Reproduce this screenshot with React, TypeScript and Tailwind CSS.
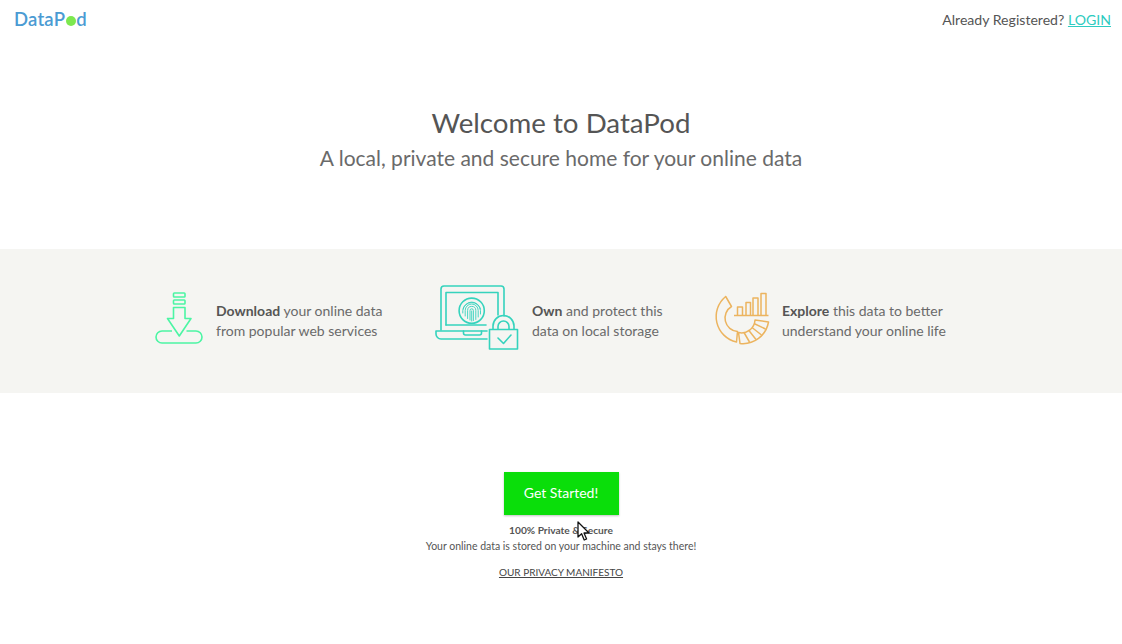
import React from 'react';

const DownloadIcon = () => (
  <svg viewBox="155 285 49 72" className="w-[49px] h-[72px] shrink-0" fill="none" stroke="#4cf5a4" strokeWidth="1.6" strokeLinejoin="round">
    <rect x="173.5" y="293" width="11.5" height="4" rx="0.8" />
    <rect x="173.5" y="300" width="11.5" height="4" rx="0.8" />
    <path d="M173.5 307.5H185V318.5H191L179.3 336L167.5 318.5H173.5Z" />
    <path d="M172 331H162A6 6 0 0 0 162 343H196A6 6 0 0 0 196 331H186.5" />
  </svg>
);

const OwnIcon = () => (
  <svg viewBox="435 285 84 72" className="w-[84px] h-[72px] shrink-0" fill="none" stroke="#35d3bd" strokeWidth="1.6" strokeLinecap="round" strokeLinejoin="round">
    <path d="M441 330V289A3 3 0 0 1 444 286H501A3 3 0 0 1 504 289V316" />
    <path d="M446 325V292.5H498V315" />
    <path d="M446 325H486" />
    <path d="M487 339H441A5 5 0 0 1 436 334V331H487" />
    <path d="M463.5 331V333A2 2 0 0 0 465.5 335H479.5A2 2 0 0 0 481.5 333V331" />
    <circle cx="471.7" cy="310.7" r="12.6" />
    <g strokeWidth="0.9">
      <path d="M463 309A9 9 0 0 1 480.5 309" />
      <path d="M462.8 313V310.5A8.9 8.9 0 0 1 480.5 310.5V314" />
      <path d="M465.2 316V310.5A6.5 6.5 0 0 1 478.2 310.5V317" />
      <path d="M467.6 318.5V310.5A4.1 4.1 0 0 1 475.8 310.5V319.5" />
      <path d="M470 320V310.5A1.7 1.7 0 0 1 473.4 310.5V320.5" />
      <path d="M471.7 311V321" />
    </g>
    <rect x="489.5" y="329.5" width="28" height="19.5" />
    <path d="M493 329V326A10.5 10.5 0 0 1 514 326V329" />
    <path d="M498 329V326.5A5.5 5.5 0 0 1 509 326.5V329" />
    <path d="M498 338L503.5 343.5L511 335" />
  </svg>
);

const ExploreIcon = () => (
  <svg viewBox="714 285 56 72" className="w-[56px] h-[72px] shrink-0" fill="none" stroke="#ecb45f" strokeWidth="1.5" strokeLinejoin="round">
    <path d="M725.7 296.5A26 26 0 0 0 736.5 342L737.5 331.5A13.5 13.5 0 0 1 731.5 306.5Z" />
    <path d="M740 343.5A26 26 0 0 0 768.5 322L755 320A13.5 13.5 0 0 1 738.5 332.5Z" />
    <path d="M744 332.5L749.5 342M748.5 330L756 339.5M752 327.5L761.5 335M754 323.5L765.5 329" />
    <path d="M734 315.5H768.5" />
    <path d="M737.5 315.5V307H742.5V315.5" />
    <path d="M746 315.5V302.5H750.5V315.5" />
    <path d="M753 315.5V298H758V315.5" />
    <path d="M761 315.5V293.5H766V315.5" />
  </svg>
);

const Feature = ({ icon, title, line1, line2, gap }: { icon: React.ReactNode; title: string; line1: string; line2: string; gap: string }) => (
  <div className={`flex items-center ${gap}`}>
    {icon}
    <p className="text-[14px] leading-[20px] text-[#6a6a6a]">
      <span className="font-bold text-[#555]">{title}</span> {line1}
      <br />
      {line2}
    </p>
  </div>
);

export default function App() {
  return (
    <div className="relative min-h-[644px] bg-white font-['Lato',sans-serif] text-[#555] overflow-hidden">
      <header className="flex items-start justify-between h-[40px] pl-[14px] pr-[11px]">
        <div className="flex items-center mt-[9px] text-[18.5px] leading-[20px] font-semibold text-[#4b9bd3] tracking-[0.2px]">
          DataP
          <span className="inline-block w-[10px] h-[10px] mt-[3px] mx-[0.5px] rounded-full bg-[#7de84f]" />
          d
        </div>
        <div className="mt-[10px] text-[14.1px] leading-[20px] text-[#555]">
          Already Registered? <a className="text-[#2ecbc0] underline">LOGIN</a>
        </div>
      </header>

      <div className="mt-[64px] text-center">
        <h1 className="text-[27.7px] leading-[38px] text-[#555]">Welcome to DataPod</h1>
        <h2 className="text-[21px] leading-[32px] text-[#6a6a6a]">A local, private and secure home for your online data</h2>
      </div>

      <section className="mt-[75px] h-[144px] bg-[#f5f5f2] pl-[155px] grid grid-cols-[280px_279px_auto] items-center">
        <Feature icon={<DownloadIcon />} gap="gap-3" title="Download" line1="your online data" line2="from popular web services" />
        <Feature icon={<OwnIcon />} gap="gap-[13px]" title="Own" line1="and protect this" line2="data on local storage" />
        <Feature icon={<ExploreIcon />} gap="gap-3" title="Explore" line1="this data to better" line2="understand your online life" />
      </section>

      <div className="mt-[79px] flex flex-col items-center">
        <button className="w-[115px] h-[43px] pb-[2px] bg-[#0ade0a] text-white text-[14px] shadow-[0_1px_2px_rgba(0,0,0,0.25)]">Get Started!</button>
        <p className="mt-[7px] text-[10.2px] leading-[16px] font-bold text-[#555]">100% Private &amp; Secure</p>
        <p className="text-[10.5px] leading-[16px] text-[#555]">Your online data is stored on your machine and stays there!</p>
        <a className="mt-[10px] text-[10px] leading-[16px] text-[#444] underline">OUR PRIVACY MANIFESTO</a>
      </div>

      <svg viewBox="0 0 14 20" className="absolute left-[577px] top-[521px] w-[14px] h-[20px]">
        <path d="M1 1V16L4.6 12.8L7.2 19L9.6 18L7 12H12Z" fill="#fff" stroke="#111" strokeWidth="1.3" strokeLinejoin="round" />
      </svg>
    </div>
  );
}
